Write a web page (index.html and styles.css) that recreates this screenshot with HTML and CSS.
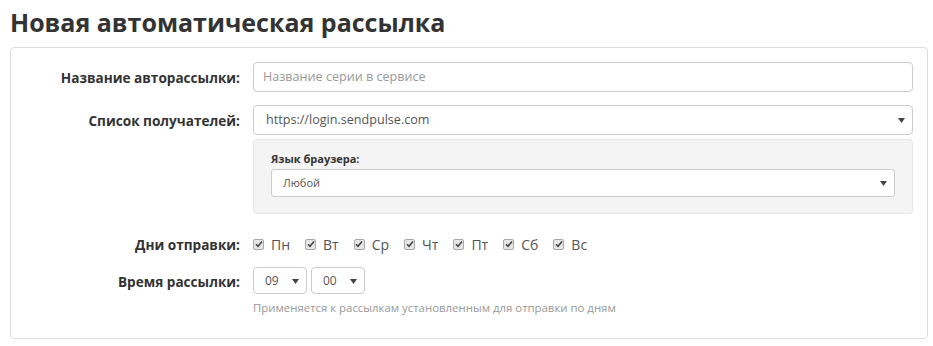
FILE: index.html
```html
<!DOCTYPE html>
<html lang="ru">
<head>
<meta charset="utf-8">
<title>Новая автоматическая рассылка</title>
<link rel="stylesheet" href="styles.css">
</head>
<body>
<h1 class="title">Новая автоматическая рассылка</h1>
<div class="panel">
  <div class="row">
    <div class="label">Название авторассылки:</div>
    <div class="field"><div class="input placeholder">Название серии в сервисе</div></div>
  </div>
  <div class="row row-select">
    <div class="label">Список получателей:</div>
    <div class="field"><div class="select">https://login.sendpulse.com<svg class="arrow" width="7" height="5" viewBox="0 0 7 5"><path d="M0 0h7L3.5 5z" fill="#444"/></svg></div></div>
  </div>
  <div class="row row-sub">
    <div class="label"></div>
    <div class="field">
      <div class="well">
        <div class="well-label">Язык браузера:</div>
        <div class="select select-sm">Любой<svg class="arrow" width="7" height="5" viewBox="0 0 7 5"><path d="M0 0h7L3.5 5z" fill="#444"/></svg></div>
      </div>
    </div>
  </div>
  <div class="row row-days">
    <div class="label">Дни отправки:</div>
    <div class="field days">
      <span class="day"><span class="cb"><svg width="8" height="8" viewBox="0 0 8 8"><path d="M1 4.2l2 2L7 1.5" fill="none" stroke="#444" stroke-width="1.6"/></svg></span>Пн</span>
      <span class="day"><span class="cb"><svg width="8" height="8" viewBox="0 0 8 8"><path d="M1 4.2l2 2L7 1.5" fill="none" stroke="#444" stroke-width="1.6"/></svg></span>Вт</span>
      <span class="day"><span class="cb"><svg width="8" height="8" viewBox="0 0 8 8"><path d="M1 4.2l2 2L7 1.5" fill="none" stroke="#444" stroke-width="1.6"/></svg></span>Ср</span>
      <span class="day"><span class="cb"><svg width="8" height="8" viewBox="0 0 8 8"><path d="M1 4.2l2 2L7 1.5" fill="none" stroke="#444" stroke-width="1.6"/></svg></span>Чт</span>
      <span class="day"><span class="cb"><svg width="8" height="8" viewBox="0 0 8 8"><path d="M1 4.2l2 2L7 1.5" fill="none" stroke="#444" stroke-width="1.6"/></svg></span>Пт</span>
      <span class="day"><span class="cb"><svg width="8" height="8" viewBox="0 0 8 8"><path d="M1 4.2l2 2L7 1.5" fill="none" stroke="#444" stroke-width="1.6"/></svg></span>Сб</span>
      <span class="day"><span class="cb"><svg width="8" height="8" viewBox="0 0 8 8"><path d="M1 4.2l2 2L7 1.5" fill="none" stroke="#444" stroke-width="1.6"/></svg></span>Вс</span>
    </div>
  </div>
  <div class="row row-time">
    <div class="label">Время рассылки:</div>
    <div class="field time">
      <div class="time-selects">
        <div class="select select-time">09<svg class="arrow" width="7" height="5" viewBox="0 0 7 5"><path d="M0 0h7L3.5 5z" fill="#444"/></svg></div>
        <div class="select select-time">00<svg class="arrow" width="7" height="5" viewBox="0 0 7 5"><path d="M0 0h7L3.5 5z" fill="#444"/></svg></div>
      </div>
      <div class="help">Применяется к рассылкам установленным для отправки по дням</div>
    </div>
  </div>
</div>
</body>
</html>
```
FILE: styles.css
```css
html, body {
  margin: 0;
  padding: 0;
  background: #fff;
  font-family: "Open Sans", "Liberation Sans", sans-serif;
  color: #333;
}
.title {
  margin: 0;
  padding: 7px 10px 0;
  font-size: 25px;
  line-height: 30px;
  font-weight: 700;
  color: #333;
}
.panel {
  margin: 10px 0 0 10px;
  width: 918px;
  box-sizing: border-box;
  height: 292px;
  border: 1px solid #ddd;
  border-radius: 4px;
  padding: 14px 14px 0 0;
}
.row {
  display: grid;
  grid-template-columns: 229px 1fr;
  column-gap: 13px;
  align-items: center;
}
.label {
  text-align: right;
  font-size: 13.6px;
  font-weight: 700;
  color: #333;
}
.row-select { margin-top: 13px; }
.row-sub { margin-top: 4px; }
.row-days { margin-top: 19px; height: 22px; }
.row-time { margin-top: 12px; align-items: start; }
.row-time .label { margin-top: 5px; }
.input, .select {
  box-sizing: border-box;
  height: 30px;
  border: 1px solid #ccc;
  border-radius: 4px;
  background: #fff;
  font-size: 12.6px;
  line-height: 28px;
  padding: 0 9px;
  color: #555;
  position: relative;
}
.placeholder { color: #999; }
.select { padding-left: 12px; }
.arrow {
  position: absolute;
  right: 7px;
  top: 50%;
  margin-top: -2px;
}
.well {
  box-sizing: border-box;
  height: 75px;
  background: #f4f4f4;
  border: 1px solid #e6e6e6;
  border-radius: 4px;
  padding: 11px 17px 0;
}
.well-label {
  font-size: 11px;
  font-weight: 700;
  line-height: 15px;
  color: #333;
  margin-bottom: 3px;
}
.select-sm {
  height: 28px;
  line-height: 26px;
  font-size: 11px;
  padding-left: 11px;
  border-radius: 3px;
}
.days {
  display: flex;
  align-items: center;
  font-size: 14px;
  color: #555;
}
.day {
  display: inline-flex;
  align-items: center;
  margin-right: 15px;
}
.cb {
  box-sizing: border-box;
  width: 11px;
  height: 11px;
  border: 1px solid #a8a8a8;
  border-radius: 2px;
  background: #e6e6e6;
  display: inline-flex;
  align-items: center;
  justify-content: center;
  margin-right: 7px;
}
.time-selects {
  display: flex;
  gap: 4px;
}
.select-time {
  width: 54px;
  height: 27px;
  line-height: 25px;
  font-size: 12px;
  padding-left: 11px;
}
.help {
  font-size: 11.4px;
  color: #999;
  line-height: 15px;
  margin-top: 6px;
}
```
